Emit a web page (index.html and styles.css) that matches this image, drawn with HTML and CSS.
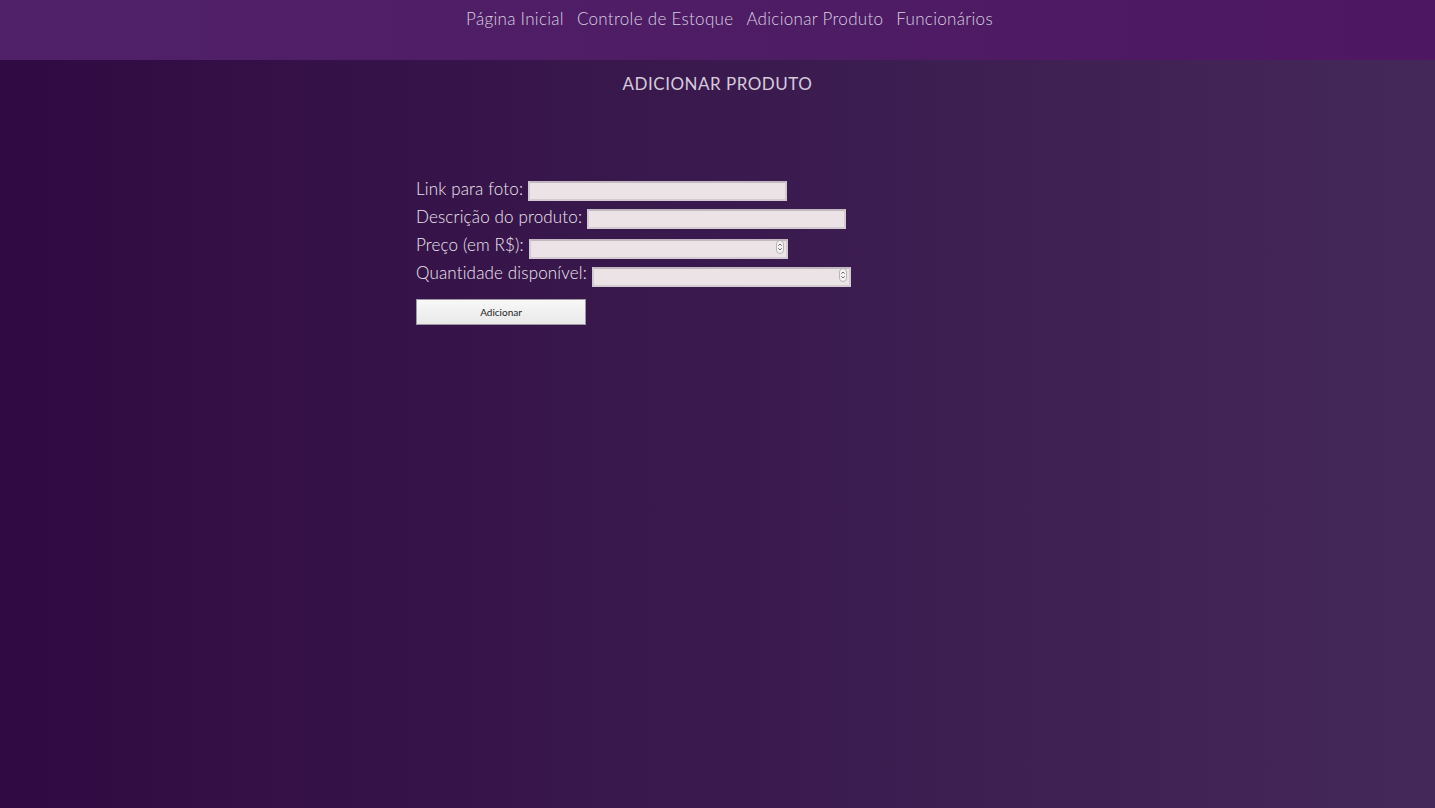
FILE: index.html
```html
<!DOCTYPE html>
<html lang="pt-BR">
<head>
<meta charset="utf-8">
<title>Adicionar Produto</title>
<link rel="stylesheet" href="styles.css">
</head>
<body>
<header class="topbar">
  <nav class="nav">
    <a class="nav-link" href="#">Página Inicial</a>
    <a class="nav-link" href="#">Controle de Estoque</a>
    <a class="nav-link" href="#">Adicionar Produto</a>
    <a class="nav-link" href="#">Funcionários</a>
  </nav>
</header>
<main class="content">
  <h1 class="title">ADICIONAR PRODUTO</h1>
  <form class="form">
    <div class="row"><label class="label">Link para foto:</label><input class="field" type="text"></div>
    <div class="row"><label class="label">Descrição do produto:</label><input class="field" type="text"></div>
    <div class="row"><label class="label">Preço (em R$):</label><span class="numwrap"><input class="field" type="number"><span class="spin"><svg width="7" height="12" viewBox="0 0 7 12"><path d="M1.5 4.5 L3.5 2.5 L5.5 4.5 M1.5 7.5 L3.5 9.5 L5.5 7.5" fill="none" stroke="#555" stroke-width="1"/></svg></span></span></div>
    <div class="row"><label class="label">Quantidade disponível:</label><span class="numwrap"><input class="field" type="number"><span class="spin"><svg width="7" height="12" viewBox="0 0 7 12"><path d="M1.5 4.5 L3.5 2.5 L5.5 4.5 M1.5 7.5 L3.5 9.5 L5.5 7.5" fill="none" stroke="#555" stroke-width="1"/></svg></span></span></div>
    <div class="actions"><button class="btn" type="button">Adicionar</button></div>
  </form>
</main>
</body>
</html>
```
FILE: styles.css
```css
html, body {
  margin: 0;
  padding: 0;
  height: 100%;
}
body {
  font-family: "Lato", "Open Sans", sans-serif;
  font-weight: 300;
  background: linear-gradient(90deg, #300a42 0%, #3a1a4e 50%, #45285a 100%);
  color: #e8dfe9;
}
.topbar {
  height: 60px;
  background: linear-gradient(90deg, #502068 0%, #4e1c64 60%, #4e1762 100%);
}
.nav {
  display: flex;
  justify-content: center;
  gap: 13px;
  padding: 7px 0 0 24px;
}
.nav-link {
  color: #d9cfe0;
  text-decoration: none;
  font-size: 17px;
  line-height: 24px;
  letter-spacing: 0.3px;
}
.content {
  display: flex;
  flex-direction: column;
  align-items: center;
}
.title {
  margin: 13px 0 0;
  font-size: 17px;
  font-weight: 400;
  letter-spacing: 0.5px;
  color: #d6cbdc;
  line-height: 22px;
}
.form {
  align-self: flex-start;
  margin: 82px 0 0 416px;
  display: flex;
  flex-direction: column;
}
.row {
  display: flex;
  align-items: center;
  height: 28px;
}
.label {
  font-size: 17px;
  color: #efe7f0;
  margin-right: 5px;
  line-height: 22px;
  margin-top: -4px;
  letter-spacing: 0.15px;
}
.field {
  box-sizing: border-box;
  width: 259px;
  height: 20px;
  border: 2px solid #d3cbd1;
  border-top-color: #c2b9c0;
  background: #ebe3e6;
  padding: 0 4px;
  margin: 0;
  font-size: 13px;
}
.field::-webkit-inner-spin-button,
.field::-webkit-outer-spin-button {
  -webkit-appearance: none;
  margin: 0;
}
.numwrap {
  position: relative;
  display: inline-block;
  height: 20px;
}
.spin {
  position: absolute;
  right: 4px;
  top: 3px;
  width: 8px;
  height: 14px;
  border-radius: 4px;
  background: #f4f1f3;
  border: 1px solid #b9b3b8;
  display: flex;
  align-items: center;
  justify-content: center;
  box-sizing: border-box;
}
.actions {
  margin-top: 10px;
}
.btn {
  width: 170px;
  height: 26px;
  border: 1px solid #9f98a2;
  background: linear-gradient(#f8f8f8, #e9e9e9);
  font-family: "Lato", sans-serif;
  font-weight: 400;
  font-size: 10px;
  color: #222;
  padding: 0;
}
```
